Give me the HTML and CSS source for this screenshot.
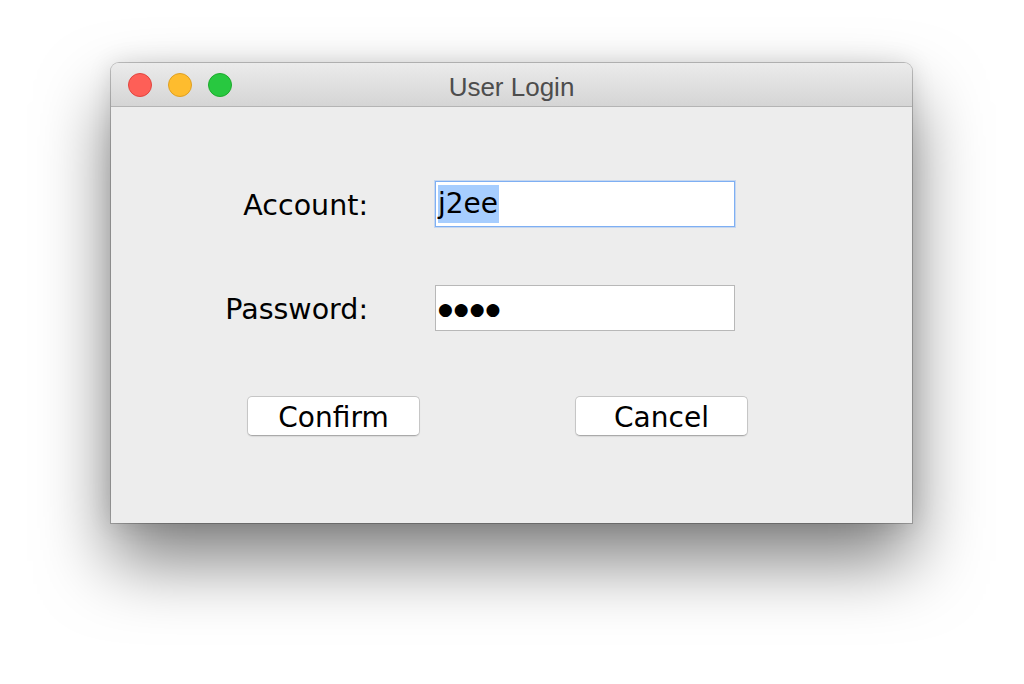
FILE: index.html
```html
<!DOCTYPE html>
<html>
<head>
<meta charset="utf-8">
<title>User Login</title>
<link rel="stylesheet" href="styles.css">
</head>
<body>
<div class="window">
  <div class="titlebar">
    <div class="lights">
      <span class="light red"></span>
      <span class="light yellow"></span>
      <span class="light green"></span>
    </div>
    <div class="title">User Login</div>
  </div>
  <div class="content">
    <div class="form">
      <label class="label">Account:</label>
      <div class="field focused"><span class="sel">j2ee</span></div>
      <label class="label">Password:</label>
      <div class="field"><span class="dots">●●●●</span></div>
    </div>
    <div class="buttons">
      <button class="btn">Confirm</button>
      <button class="btn">Cancel</button>
    </div>
  </div>
</div>
</body>
</html>
```
FILE: styles.css
```css
html, body {
  margin: 0;
  padding: 0;
  background: #ffffff;
  width: 1024px;
  height: 684px;
  overflow: hidden;
}
body {
  padding-top: 63px;
  padding-left: 111px;
  box-sizing: border-box;
  font-family: "DejaVu Sans", "Liberation Sans", sans-serif;
}
.window {
  width: 801px;
  height: 460px;
  background: #ededed;
  border-radius: 8px 8px 0 0;
  box-shadow: 0 0 0 1px rgba(0,0,0,0.22), 0 38px 70px 0 rgba(0,0,0,0.5), 0 0 24px rgba(0,0,0,0.12);
  display: flex;
  flex-direction: column;
}
.titlebar {
  height: 43px;
  border-radius: 8px 8px 0 0;
  background: linear-gradient(#ebebeb, #d5d5d5);
  border-bottom: 1px solid #b4b4b4;
  display: flex;
  align-items: center;
  position: relative;
  flex: none;
}
.lights {
  display: flex;
  gap: 16px;
  padding-left: 17px;
}
.light {
  width: 22px;
  height: 22px;
  border-radius: 50%;
  border: 1px solid;
}
.red { background: #fe5f57; border-color: #e1453f; }
.yellow { background: #febc2e; border-color: #dfa022; }
.green { background: #28c840; border-color: #1dab2c; }
.title {
  position: absolute;
  left: 0;
  right: 0;
  text-align: center;
  font-family: "Liberation Sans", Arial, sans-serif;
  font-size: 26px;
  color: #4d4d4d;
  top: 9px;
}
.content {
  padding-top: 74px;
}
.form {
  display: grid;
  grid-template-columns: 257px 300px;
  grid-auto-rows: 46px;
  column-gap: 67px;
  row-gap: 58px;
}
.label {
  justify-self: end;
  align-self: center;
  font-size: 28.5px;
  color: #000;
  padding-top: 3px;
}
.field {
  background: #fff;
  border: 1px solid #b8b8b8;
  box-sizing: border-box;
  display: flex;
  align-items: center;
  padding-left: 2px;
  font-size: 28px;
  color: #000;
}
.field.focused {
  border-color: #7eaff3;
  box-shadow: 0 0 0 1px rgba(126,175,243,0.35);
}
.sel {
  background: #a6cdfe;
  line-height: 38px;
  padding-right: 1px;
}
.dots {
  font-size: 17px;
  letter-spacing: 1px;
  line-height: 1;
  padding-top: 2px;
}
.buttons {
  display: flex;
  gap: 155px;
  padding-left: 136px;
  margin-top: 65px;
}
.btn {
  width: 173px;
  height: 40px;
  background: #fff;
  border: 1px solid #c6c6c6;
  border-bottom-color: #aaaaaa;
  border-radius: 5px;
  box-shadow: 0 1px 1px rgba(0,0,0,0.08);
  font-family: "DejaVu Sans", "Liberation Sans", sans-serif;
  font-size: 28px;
  color: #000;
  padding: 4px 0 0 0;
  line-height: 34px;
}
```
